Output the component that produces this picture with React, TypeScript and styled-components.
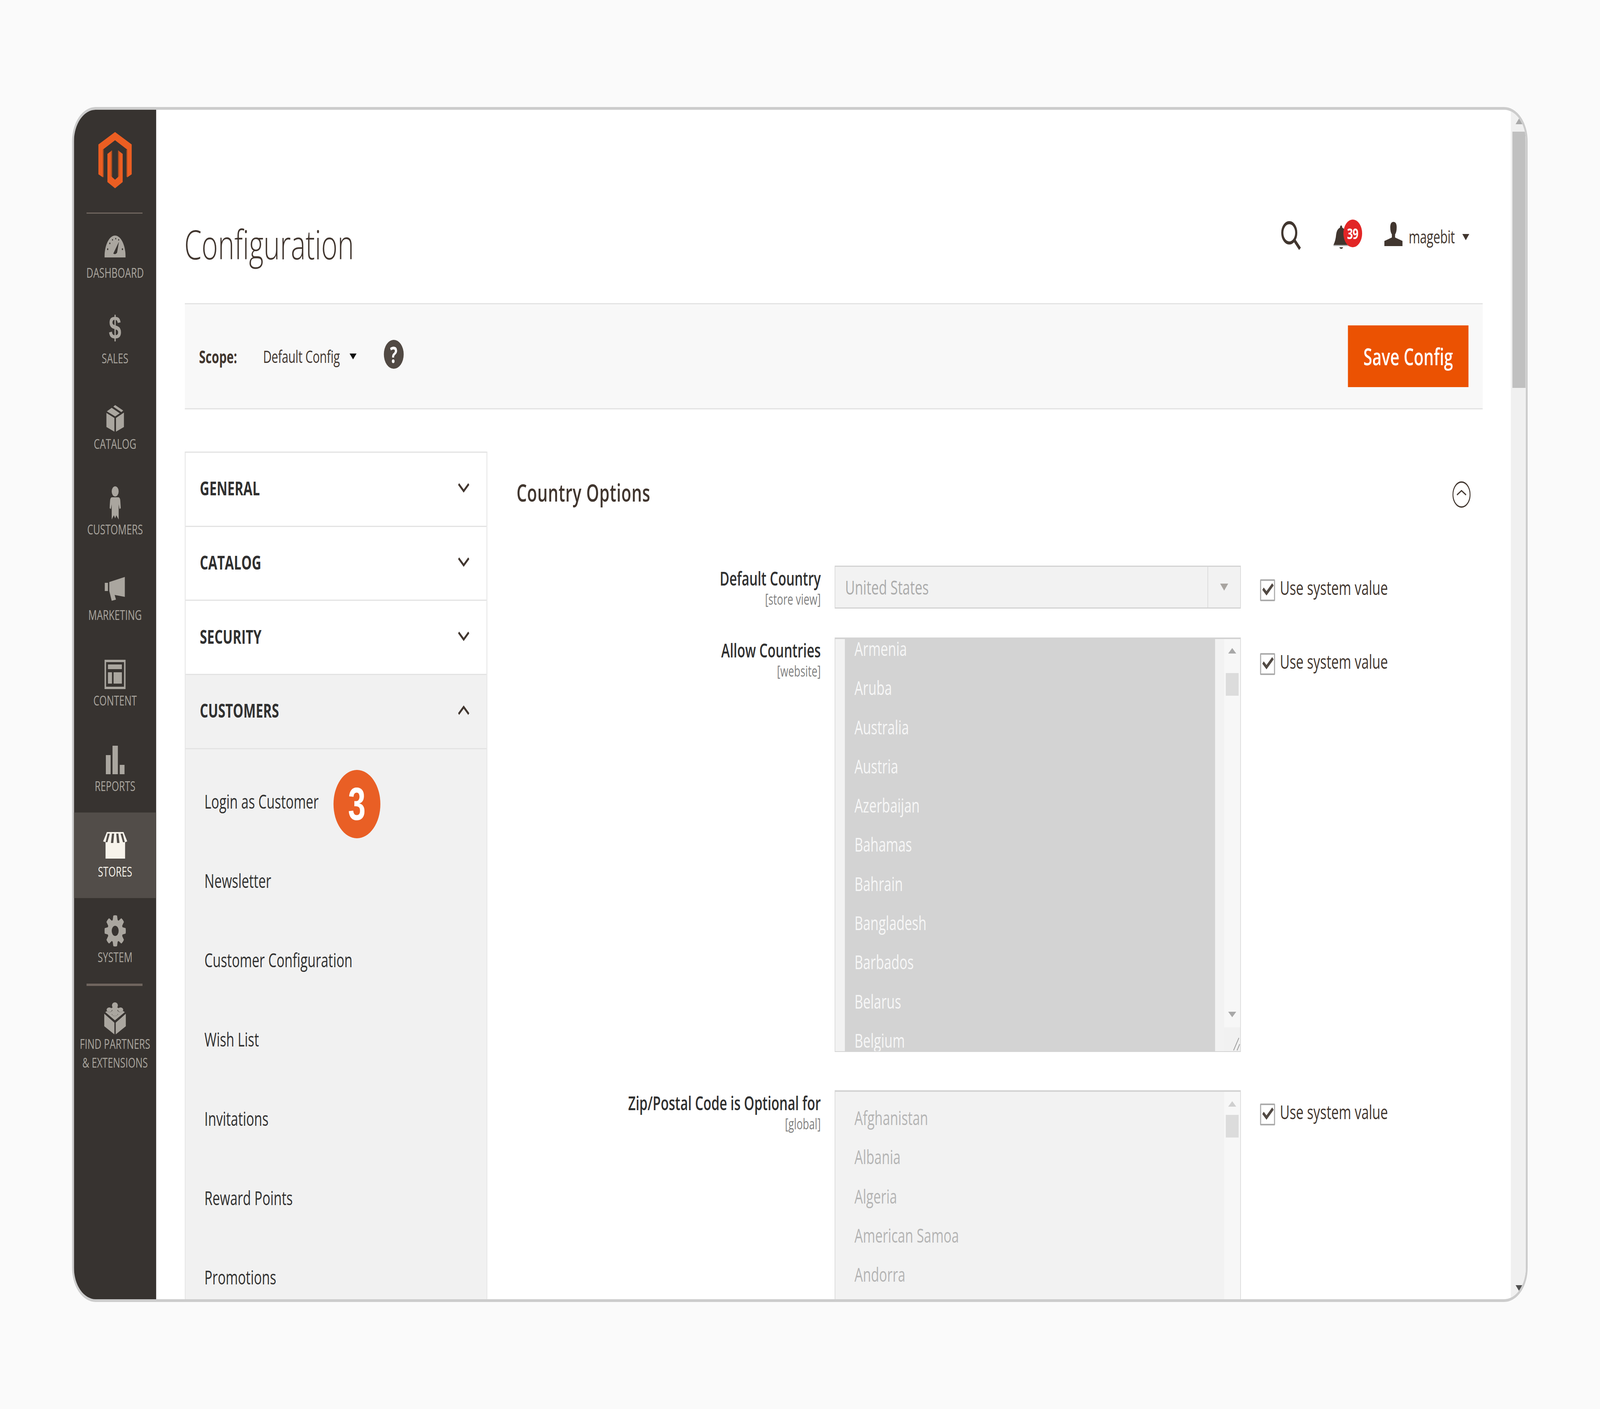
import React from 'react';
import styled, { createGlobalStyle } from 'styled-components';

const DESIGN_WIDTH = 5973;

const Global = createGlobalStyle`
  html, body { margin: 0; padding: 0; background: #fafafa; width: 100%; height: 100%; overflow: hidden; }
  body { font-family: "Open Sans", "Liberation Sans", sans-serif; color: #41362f; }
  * { box-sizing: border-box; }
`;

const Viewport = styled.div`
  width: 100vw;
  height: 100vh;
  overflow: hidden;
  background: #fafafa;
`;
const Page = styled.div`
  width: 5973px;
  height: 3607px;
  padding: 274px 0 0 269px;
  background: #fafafa;
  transform-origin: 0 0;
`;
const Frame = styled.div`
  width: 5434px;
  height: 3059px;
  border: 7px solid #cccccc;
  border-radius: 88px;
  overflow: hidden;
  background: #fff;
  display: flex;
`;

/* Sidebar */
const Sidebar = styled.aside`
  width: 307px;
  flex: none;
  background: #373330;
  display: flex;
  flex-direction: column;
`;
const LogoBox = styled.div`
  height: 263px;
  display: flex;
  justify-content: center;
  padding-top: 57px;
`;
const NavDivider = styled.div<{ $h: number }>`
  width: 209px;
  height: ${p => p.$h}px;
  margin-left: 47px;
  background: #6f655e;
  flex: none;
`;
const NavItem = styled.div<{ $active?: boolean }>`
  height: 219px;
  flex: none;
  background: ${p => (p.$active ? '#524d49' : 'transparent')};
  color: ${p => (p.$active ? '#f7f3eb' : '#aaa69f')};
  display: flex;
  flex-direction: column;
  align-items: center;
  padding-top: 41px;
`;
const NavIcon = styled.div`
  height: 86px;
  display: flex;
  align-items: center;
  justify-content: center;
  svg { display: block; fill: currentColor; }
`;
const NavLabel = styled.div`
  font-size: 35.5px;
  line-height: 47.5px;
  text-align: center;
  white-space: nowrap;
  text-transform: uppercase;
`;
const DollarGlyph = styled.span`
  font-family: "Liberation Sans", sans-serif;
  font-weight: 700;
  font-size: 84px;
  line-height: 96px;
  margin-top: -22px;
`;

/* Main */
const Main = styled.main`
  flex: 1;
  min-width: 0;
  padding: 0 105px 0 107px;
`;
const Header = styled.header`
  height: 495px;
  padding: 280px 50px 0 0;
  display: flex;
  justify-content: space-between;
  align-items: flex-start;
`;
const Title = styled.h1`
  margin: -2px 0 0 -2px;
  font-weight: 300;
  font-size: 104px;
  line-height: 130px;
  color: #41362f;
`;
const Actions = styled.div`
  display: flex;
  align-items: flex-start;
  height: 81px;
`;
const SearchIcon = styled.svg`
  width: 74px;
  height: 74px;
  margin: 5px 120px 0 0;
  display: block;
`;
const Bell = styled.div`
  position: relative;
  width: 106px;
  height: 75px;
  margin: 1px 85px 0 0;
  svg { display: block; }
`;
const BellBadge = styled.span`
  position: absolute;
  left: 38px;
  top: 0;
  width: 70px;
  height: 71px;
  border-radius: 50%;
  background: #e22626;
  color: #fff;
  font-weight: 700;
  font-size: 38px;
  line-height: 71px;
  text-align: center;
  letter-spacing: -1px;
`;
const UserIcon = styled.svg`
  width: 68px;
  height: 62px;
  margin-top: 7px;
  display: block;
`;
const UserName = styled.span`
  margin-left: 23px;
  font-size: 46px;
  line-height: 88px;
  letter-spacing: -0.4px;
`;
const Caret = styled.i<{ $w: number; $h: number; $c: string }>`
  display: block;
  flex: none;
  width: 0;
  height: 0;
  border-left: ${p => p.$w / 2}px solid transparent;
  border-right: ${p => p.$w / 2}px solid transparent;
  border-top: ${p => p.$h}px solid ${p => p.$c};
`;
const UserCaret = styled(Caret)`
  margin: 38px 0 0 28px;
`;

const Toolbar = styled.div`
  height: 272px;
  background: #f8f8f8;
  border-top: 3px solid #e3e3e3;
  border-bottom: 3px solid #e3e3e3;
  display: flex;
  align-items: center;
  padding: 0 53px;
`;
const ScopeLabel = styled.span`
  font-weight: 700;
  font-size: 44.5px;
  width: 239px;
`;
const ScopeValue = styled.span`
  font-size: 44px;
  letter-spacing: -0.4px;
  width: 323px;
`;
const Help = styled.span`
  width: 74px;
  height: 74px;
  border-radius: 50%;
  background: #514943;
  color: #fff;
  font-weight: 700;
  font-size: 58px;
  line-height: 74px;
  text-align: center;
  margin: -10px 0 0 102px;
  flex: none;
`;
const SaveButton = styled.button`
  margin-left: auto;
  width: 450px;
  height: 158px;
  border: 0;
  background: #eb5202;
  color: #fff;
  font-family: inherit;
  font-weight: 600;
  font-size: 60px;
`;

const Content = styled.div`
  margin-top: 108px;
  display: flex;
  align-items: flex-start;
  gap: 109px;
`;

/* Accordion */
const Panel = styled.nav`
  width: 1129px;
  flex: none;
  border: 3px solid #e3e3e3;
  border-bottom: 0;
`;
const PanelHead = styled.div<{ $open?: boolean }>`
  height: 189.7px;
  padding: 0 64px 6px 53px;
  display: flex;
  align-items: center;
  justify-content: space-between;
  font-weight: 700;
  font-size: 49px;
  color: #303030;
  background: ${p => (p.$open ? '#f1f1f1' : '#fff')};
  border-bottom: 3px solid #e3e3e3;
  svg { display: block; }
`;
const SubList = styled.div`
  background: #f1f1f1;
  padding: 31px 0 200px 70px;
`;
const SubItem = styled.div`
  height: 203px;
  display: flex;
  align-items: center;
  font-size: 49.3px;
  color: #303030;
  gap: 55px;
`;
const StepBadge = styled.span`
  width: 175px;
  height: 175px;
  border-radius: 50%;
  background: #e95f25;
  color: #fff;
  font-family: "Liberation Sans", sans-serif;
  font-weight: 700;
  font-size: 118px;
  line-height: 175px;
  text-align: center;
  margin-top: 16px;
  flex: none;
`;

/* Form */
const Form = styled.section`
  flex: 1;
  min-width: 0;
`;
const SectionHead = styled.div`
  height: 292px;
  padding: 50px 45px 0 0;
  display: flex;
  justify-content: space-between;
  align-items: flex-start;
  svg { display: block; margin-top: 26px; }
`;
const SectionTitle = styled.h2`
  margin: 0;
  font-weight: 600;
  font-size: 61px;
  line-height: 110px;
  letter-spacing: 1px;
  color: #41362f;
`;
const Row = styled.div<{ $h: number; $mb: number }>`
  height: ${p => p.$h}px;
  margin-bottom: ${p => p.$mb}px;
  display: flex;
  align-items: flex-start;
`;
const LabelCol = styled.div`
  width: 1136px;
  flex: none;
  text-align: right;
  margin-right: 52px;
`;
const Label = styled.div`
  font-weight: 600;
  font-size: 49px;
  line-height: 64px;
  color: #303030;
`;
const ScopeTag = styled.div`
  font-size: 38.5px;
  line-height: 42px;
  color: #808080;
`;
const Select = styled.div`
  width: 1516px;
  height: 110px;
  flex: none;
  background: #f2f2f2;
  border: 3px solid #d3d3d3;
  border-left-width: 2px;
  border-right-width: 2px;
  display: flex;
  align-items: center;
  font-size: 50px;
  color: #ababab;
`;
const SelectText = styled.span`
  flex: 1;
  padding-left: 37px;
`;
const SelectBtn = styled.span`
  width: 122px;
  height: 100%;
  flex: none;
  border-left: 2px solid #d3d3d3;
  display: flex;
  align-items: center;
  justify-content: center;
`;
const ListBox = styled.div`
  width: 1516px;
  height: 100%;
  flex: none;
  background: #f2f2f2;
  border: 2px solid #d3d3d3;
  border-top-width: 4px;
  display: flex;
  overflow: hidden;
`;
const ListOptions = styled.div`
  flex: 1;
  min-width: 0;
  padding: 0 34px 0 36px;
  overflow: hidden;
`;
const OptionStack = styled.div<{ $offset: number }>`
  padding-top: ${p => p.$offset}px;
`;
const ClippedStack = styled.div`
  margin-top: -26px;
`;
const Option = styled.div<{ $selected?: boolean }>`
  height: 100.3px;
  line-height: 100.3px;
  padding-left: 36px;
  font-size: 49.5px;
  color: ${p => (p.$selected ? '#f7f7f7' : '#b4b4b4')};
`;
const SelectedFill = styled.div`
  height: 100%;
  background: #d3d3d3;
  overflow: hidden;
`;
const Track = styled.div<{ $pad: number }>`
  width: 60px;
  flex: none;
  background: #f7f7f7;
  display: flex;
  flex-direction: column;
  align-items: center;
  padding-top: ${p => p.$pad}px;
`;
const TrackThumb = styled.div<{ $top: number }>`
  width: 48px;
  height: 58px;
  margin-top: ${p => p.$top}px;
  background: #dcdcdc;
`;
const UpCaret = styled(Caret)`
  transform: rotate(180deg);
`;
const TrackDown = styled(Caret)`
  margin-top: auto;
`;
const Resizer = styled.div`
  width: 100%;
  height: 61px;
  margin-top: 26px;
  background: #f1f1f1;
  display: flex;
  justify-content: flex-end;
  align-items: flex-end;
  svg { display: block; }
`;
const UseSystem = styled.label<{ $top: number }>`
  margin: ${p => p.$top}px 0 0 72px;
  display: flex;
  align-items: flex-start;
  font-size: 50px;
  line-height: 56px;
  color: #41362f;
  white-space: nowrap;
`;
const CheckBox = styled.span`
  width: 56px;
  height: 56px;
  border: 4px solid #ababab;
  border-radius: 3px;
  margin-right: 18px;
  flex: none;
  background: #fff;
  svg { display: block; margin: -4px; }
`;
const CheckText = styled.span`
  margin-top: -7px;
`;

/* Page scrollbar */
const PageScroll = styled.div`
  width: 56px;
  flex: none;
  background: #f0f0f0;
  display: flex;
  flex-direction: column;
  align-items: flex-end;
  padding: 22px 1px 21px 6px;
`;
const PageThumb = styled.div`
  width: 49px;
  height: 656px;
  margin-top: 19px;
  background: #c0c0c0;
`;
const PageArrowUp = styled(UpCaret)`
  align-self: center;
`;
const PageArrowDown = styled(Caret)`
  margin-top: auto;
  align-self: center;
`;

const Logo = () => (
  <svg width="125" height="144" viewBox="0 0 125 144">
    <path fill="#eb5e22" d="M62.5 0 125 32V108L108 116V45L62.5 21 17 45V116L0 108V32Z" />
    <path fill="#b3501f" d="M17 45V114L20 116V44ZM108 44V116L105 114V46Z" />
    <path fill="#eb5e22" d="M34 56 51 47V115L62.5 122 74 115V47L91 56V128L62.5 144 34 128Z" />
    <path fill="#b3501f" d="M74 47V115L78 113V49ZM51 47V115L47 113V49Z" />
  </svg>
);

const DashIcon = () => (
  <svg width="79" height="56" viewBox="0 0 79 56">
    <path d="M0 56C0 24 18 0 39.5 0 61 0 79 24 79 56Z" />
    <g fill="#373330">
      <circle cx="12" cy="35" r="2.4" /><circle cx="20" cy="20" r="2.2" /><circle cx="30" cy="11" r="2" />
      <circle cx="42" cy="8" r="2" /><circle cx="53" cy="11" r="2" /><circle cx="67" cy="35" r="2.4" />
      <path d="M33 46 54 16 47 44Q40 50 33 46Z" />
    </g>
  </svg>
);
const CatalogIcon = () => (
  <svg width="66" height="72" viewBox="0 0 66 72">
    <path d="M0 24 30 37V72L0 60ZM36 37 66 23V60L36 72ZM2 20 20 11 50 25 33 33ZM26 8 33 4 63 18 56 22Z" />
  </svg>
);
const CustomerIcon = () => (
  <svg width="42" height="87" viewBox="0 0 42 87">
    <ellipse cx="21" cy="13" rx="13" ry="13" />
    <path d="M8 28H34Q39 29 40 36L42 56 37 58 34 46V85L25 74 21 82 16 74 8 85V46L5 58 0 56 2 36Q3 29 8 28Z" />
  </svg>
);
const MarketingIcon = () => (
  <svg width="77" height="61" viewBox="0 0 77 61">
    <path d="M0 15H12V36H0ZM17 13 75 0V51L37 46 42 58 26 61 17 36Z" />
  </svg>
);
const ContentIcon = () => (
  <svg width="79" height="75" viewBox="0 0 79 75">
    <path fillRule="evenodd" d="M0 0H79V75H0ZM6 6V69H73V6Z" />
    <path d="M13 12H65V24H13ZM13 32H28V61H13ZM34 32H65V61H34Z" />
  </svg>
);
const ReportIcon = () => (
  <svg width="70" height="73" viewBox="0 0 70 73">
    <path d="M0 24H18V73H0ZM25 0H45V73H25ZM52 49H70V73H52Z" />
  </svg>
);
const StoreIcon = () => (
  <svg width="90" height="68" viewBox="0 0 90 68">
    <path d="M14 0H76L90 24 82 26V68H9V26L0 24Z" />
    <path fill="#524d49" d="M17 4H25L16 26H9ZM33 4H41L38 28H29ZM49 4H57L61 28H52ZM65 4H73L81 26H74Z" />
  </svg>
);
const GearIcon = () => (
  <svg width="80" height="80" viewBox="0 0 80 80">
    <circle cx="40" cy="40" r="29" />
    {[0, 45, 90, 135, 180, 225, 270, 315].map(a => (
      <path key={a} d="M33 1Q40-1 47 1L50 16H30Z" transform={`rotate(${a} 40 40)`} />
    ))}
    <circle cx="40" cy="40" r="13" fill="#373330" />
  </svg>
);
const LegoIcon = () => (
  <svg width="81" height="82" viewBox="0 0 81 82">
    <path d="M0 29 38 52V82L0 61ZM43 52 81 29V61L43 82ZM4 25 40 9 77 25 40 46Z" />
    <g fill="none" stroke="#373330" strokeWidth="2.5">
      <path d="M29 10Q40 18 51 10" />
      <path d="M9 20Q19 28 30 20" />
      <path d="M50 20Q60 28 71 20" />
      <path d="M29 30Q40 38 51 30" />
    </g>
    <g>
      <ellipse cx="40" cy="8" rx="11" ry="8" /><ellipse cx="19" cy="19" rx="10" ry="6" />
      <ellipse cx="61" cy="19" rx="10" ry="6" /><ellipse cx="40" cy="29" rx="11" ry="6" />
    </g>
  </svg>
);

const navItems: { label: string; icon: React.ReactNode; active?: boolean }[] = [
  { label: 'Dashboard', icon: <DashIcon /> },
  { label: 'Sales', icon: <DollarGlyph>$</DollarGlyph> },
  { label: 'Catalog', icon: <CatalogIcon /> },
  { label: 'Customers', icon: <CustomerIcon /> },
  { label: 'Marketing', icon: <MarketingIcon /> },
  { label: 'Content', icon: <ContentIcon /> },
  { label: 'Reports', icon: <ReportIcon /> },
  { label: 'Stores', icon: <StoreIcon />, active: true },
  { label: 'System', icon: <GearIcon /> },
];

const Chevron = ({ up }: { up?: boolean }) => (
  <svg width="42" height="24" viewBox="0 0 42 24" fill="none" stroke="#41362f" strokeWidth="6">
    <path d={up ? 'M2 22 21 4 40 22' : 'M2 2 21 20 40 2'} />
  </svg>
);

const UseSystemValue = ({ top }: { top: number }) => (
  <UseSystem $top={top}>
    <CheckBox>
      <svg width="56" height="56" viewBox="0 0 56 56" fill="none" stroke="#514943" strokeWidth="8">
        <path d="M11 24 24 36 48 13" />
      </svg>
    </CheckBox>
    <CheckText>Use system value</CheckText>
  </UseSystem>
);

const allowed = ['Armenia', 'Aruba', 'Australia', 'Austria', 'Azerbaijan', 'Bahamas', 'Bahrain', 'Bangladesh', 'Barbados', 'Belarus', 'Belgium'];
const zip = ['Afghanistan', 'Albania', 'Algeria', 'American Samoa', 'Andorra'];
const subs = ['Newsletter', 'Customer Configuration', 'Wish List', 'Invitations', 'Reward Points', 'Promotions'];

export default function App() {
  // The browser caps its window below the design width: fit the design to what it really has.
  const fit = Math.min(1, window.innerWidth / DESIGN_WIDTH);
  return (
    <Viewport>
      <Global />
      <Page style={{ transform: `scale(${fit}, 1)` }}>
        <Frame>
          <Sidebar>
            <LogoBox><Logo /></LogoBox>
            <NavDivider $h={3} />
            {navItems.map(n => (
              <NavItem key={n.label} $active={n.active}>
                <NavIcon>{n.icon}</NavIcon>
                <NavLabel>{n.label}</NavLabel>
              </NavItem>
            ))}
            <NavDivider $h={6} />
            <NavItem>
              <NavIcon><LegoIcon /></NavIcon>
              <NavLabel>Find Partners<br />&amp; Extensions</NavLabel>
            </NavItem>
          </Sidebar>
          <Main>
            <Header>
              <Title>Configuration</Title>
              <Actions>
                <SearchIcon viewBox="0 0 74 74" fill="none" stroke="#41362f">
                  <circle cx="30" cy="30" r="26" strokeWidth="8" />
                  <path d="M49 49 70 71" strokeWidth="9" />
                </SearchIcon>
                <Bell>
                  <svg width="60" height="75" viewBox="0 0 60 75">
                    <path fill="#41362f" d="M30 15Q33 15 34 21 46 24 48 38 49 54 58 65H1Q9 54 11 38 14 24 25 21 26 15 30 15Z" />
                    <path fill="#b5b5b5" d="M1 65H60V68H1Z" />
                    <path fill="#41362f" d="M23 71H37Q35 75 30 75 25 75 23 71Z" />
                  </svg>
                  <BellBadge>39</BellBadge>
                </Bell>
                <UserIcon viewBox="0 0 68 62" fill="#41362f">
                  <path d="M34 0Q46 0 46 14 46 26 40 32V40L62 47 68 49V62H0V49L6 47 28 40V32Q22 26 22 14 22 0 34 0Z" />
                </UserIcon>
                <UserName>magebit</UserName>
                <UserCaret $w={27} $h={16} $c="#41362f" />
              </Actions>
            </Header>
            <Toolbar>
              <ScopeLabel>Scope:</ScopeLabel>
              <ScopeValue>Default Config</ScopeValue>
              <Caret $w={26} $h={15} $c="#111" />
              <Help>?</Help>
              <SaveButton>Save Config</SaveButton>
            </Toolbar>
            <Content>
              <Panel>
                <PanelHead>GENERAL<Chevron /></PanelHead>
                <PanelHead>CATALOG<Chevron /></PanelHead>
                <PanelHead>SECURITY<Chevron /></PanelHead>
                <PanelHead $open>CUSTOMERS<Chevron up /></PanelHead>
                <SubList>
                  <SubItem>Login as Customer<StepBadge>3</StepBadge></SubItem>
                  {subs.map(s => <SubItem key={s}>{s}</SubItem>)}
                </SubList>
              </Panel>
              <Form>
                <SectionHead>
                  <SectionTitle>Country Options</SectionTitle>
                  <svg width="68" height="68" viewBox="0 0 68 68" fill="none" stroke="#41362f" strokeWidth="3.5">
                    <circle cx="34" cy="34" r="32" />
                    <path d="M17 35 34 24 51 35" />
                  </svg>
                </SectionHead>
                <Row $h={110} $mb={74}>
                  <LabelCol>
                    <Label>Default Country</Label>
                    <ScopeTag>[store view]</ScopeTag>
                  </LabelCol>
                  <Select>
                    <SelectText>United States</SelectText>
                    <SelectBtn><Caret $w={30} $h={18} $c="#a8a4a0" /></SelectBtn>
                  </Select>
                  <UseSystemValue top={35} />
                </Row>
                <Row $h={1061} $mb={98}>
                  <LabelCol>
                    <Label>Allow Countries</Label>
                    <ScopeTag>[website]</ScopeTag>
                  </LabelCol>
                  <ListBox>
                    <ListOptions>
                      <SelectedFill>
                        <ClippedStack>
                          {allowed.map(o => <Option key={o} $selected>{o}</Option>)}
                        </ClippedStack>
                      </SelectedFill>
                    </ListOptions>
                    <Track $pad={23}>
                      <UpCaret $w={30} $h={14} $c="#a8a8a8" />
                      <TrackThumb $top={50} />
                      <TrackDown $w={30} $h={14} $c="#a8a8a8" />
                      <Resizer>
                        <svg width="30" height="40" viewBox="0 0 30 40" fill="none" stroke="#9a9a9a" strokeWidth="2.5">
                          <path d="M5 38 25 6M18 38 28 22" />
                        </svg>
                      </Resizer>
                    </Track>
                  </ListBox>
                  <UseSystemValue top={40} />
                </Row>
                <Row $h={700} $mb={0}>
                  <LabelCol>
                    <Label>Zip/Postal Code is Optional for</Label>
                    <ScopeTag>[global]</ScopeTag>
                  </LabelCol>
                  <ListBox>
                    <ListOptions>
                      <OptionStack $offset={16}>
                        {zip.map(o => <Option key={o}>{o}</Option>)}
                      </OptionStack>
                    </ListOptions>
                    <Track $pad={24}>
                      <UpCaret $w={30} $h={14} $c="#cfcfcf" />
                      <TrackThumb $top={21} />
                    </Track>
                  </ListBox>
                  <UseSystemValue top={34} />
                </Row>
              </Form>
            </Content>
          </Main>
          <PageScroll>
            <PageArrowUp $w={26} $h={15} $c="#a9a9a9" />
            <PageThumb />
            <PageArrowDown $w={26} $h={15} $c="#505050" />
          </PageScroll>
        </Frame>
      </Page>
    </Viewport>
  );
}
